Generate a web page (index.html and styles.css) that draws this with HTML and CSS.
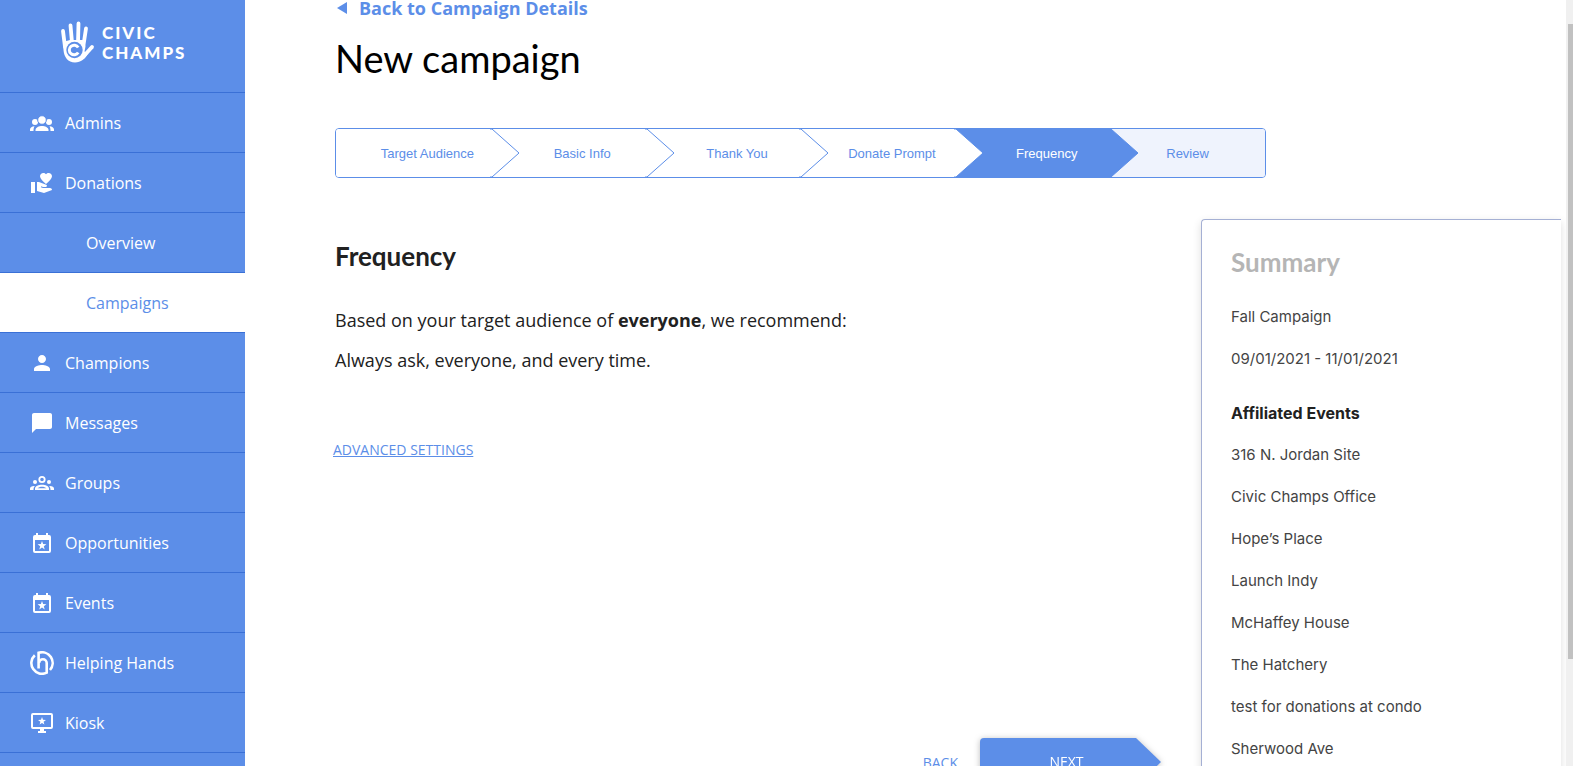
FILE: index.html
```
<!DOCTYPE html>
<html lang="en">
<head>
<meta charset="utf-8">
<meta name="viewport" content="width=device-width, initial-scale=1">
<title>New campaign - Civic Champs</title>
<link rel="stylesheet" href="styles.css">
</head>
<body>

<aside class="sidebar">
  <a class="logo" href="#">
    <svg class="logo-hand" viewBox="0 0 36 44" aria-hidden="true">
      <g fill="none" stroke="#fff" stroke-width="3.800" stroke-linecap="round">
        <path d="M3 11l2 16M10.500 5.500l1.500 17M18.500 3.500l-.5 19M26 8.500L23.500 25"/>
        <path d="M32 27L23 37"/>
      </g>
      <path fill="#fff" d="M3 22l7-2h14l1.500 6.500-1 5 3.500 2c-3 5.500-7 9-13 9C8 42.500 4 37 3.500 30z"/>
      <circle cx="14.500" cy="30" r="8.200" fill="#5c8ee8"/>
      <path d="M18.200 27.500a4.800 4.800 0 1 0 0 5" fill="none" stroke="#fff" stroke-width="3"/>
    </svg>
    <span class="logo-text">CIVIC<br>CHAMPS</span>
  </a>
  <nav class="menu">
    <a href="#">
      <svg viewBox="0 0 24 24"><circle cx="5" cy="11" r="3"/><circle cx="19" cy="11" r="3"/><path d="M0 20v-1.500C0 16.500 2 15.500 4.500 15.300 3.800 16.500 3.500 18 3.500 20zM24 20v-1.500c0-2-2-3-4.500-3.200.7 1.200 1 2.700 1 4.700z"/><path d="M5.500 20v-1c0-2.500 3.500-4 6.500-4s6.500 1.500 6.500 4v1z"/><circle cx="12" cy="9" r="4.300" stroke="#5c8ee8"/></svg>
      Admins
    </a>
    <a href="#">
      <svg viewBox="0 0 24 24"><path d="M1 11h4v11H1zM16 3.250C16.650 2.490 17.660 2 18.700 2 20.550 2 22 3.450 22 5.300c0 2.270-2.910 4.900-6 7.700-3.090-2.810-6-5.440-6-7.700C10 3.450 11.450 2 13.300 2c1.040 0 2.050.49 2.700 1.250zM20 17h-7l-2.090-.73.33-.94L13 16h2.820c.65 0 1.180-.53 1.180-1.180 0-.49-.31-.93-.77-1.110L8.970 11H7v9.020L14 22l8.010-3c-.01-1.100-.9-2-2.010-2z"/></svg>
      Donations
    </a>
    <a class="sub" href="#">Overview</a>
    <a class="sub active" href="#" aria-current="page">Campaigns</a>
    <a href="#">
      <svg viewBox="0 0 24 24"><path d="M12 12c2.210 0 4-1.790 4-4s-1.790-4-4-4-4 1.790-4 4 1.790 4 4 4zm0 2c-2.670 0-8 1.340-8 4v2h16v-2c0-2.660-5.330-4-8-4z"/></svg>
      Champions
    </a>
    <a href="#">
      <svg viewBox="0 0 24 24"><path d="M20 2H4c-1.100 0-2 .9-2 2v18l4-4h14c1.100 0 2-.9 2-2V4c0-1.100-.9-2-2-2z"/></svg>
      Messages
    </a>
    <a href="#">
      <svg viewBox="0 0 24 24"><circle cx="5" cy="11" r="2"/><circle cx="19" cy="11" r="2"/><path d="M0 19v-1.500c0-1.800 2-2.700 4.800-2.500-.9 1.200-1.300 2.300-1.300 4zM24 19v-1.500c0-1.800-2-2.700-4.800-2.500.9 1.200 1.300 2.300 1.300 4z"/><path fill-rule="evenodd" d="M5 19v-1.500c0-2.200 3.600-3.700 7-3.700s7 1.500 7 3.700V19zM7.600 17.300h8.800c-.8-.9-2.600-1.500-4.400-1.500s-3.600.6-4.400 1.500z"/><circle cx="12" cy="8.500" r="2.700" fill="none" stroke="#fff" stroke-width="1.800"/></svg>
      Groups
    </a>
    <a href="#">
      <svg viewBox="0 0 24 24"><path fill-rule="evenodd" d="M6 2h2v2h8V2h2v2h1a2 2 0 0 1 2 2v14a2 2 0 0 1-2 2H5a2 2 0 0 1-2-2V6a2 2 0 0 1 2-2h1zM5 9v11h14V9z"/><path d="M12 10l1.100 3.100 3.300.1-2.600 2 .9 3.200-2.700-1.900-2.700 1.900.9-3.200-2.600-2 3.300-.1z"/></svg>
      Opportunities
    </a>
    <a href="#">
      <svg viewBox="0 0 24 24"><path fill-rule="evenodd" d="M6 2h2v2h8V2h2v2h1a2 2 0 0 1 2 2v14a2 2 0 0 1-2 2H5a2 2 0 0 1-2-2V6a2 2 0 0 1 2-2h1zM5 9v11h14V9z"/><path d="M12 10l1.100 3.100 3.300.1-2.600 2 .9 3.200-2.700-1.900-2.700 1.900.9-3.200-2.600-2 3.300-.1z"/></svg>
      Events
    </a>
    <a href="#">
      <svg viewBox="0 0 24 24"><g fill="none" stroke="#fff" stroke-width="2.600"><path d="M4.800 4.200A10.700 10.700 0 0 0 16.700 21.700V12a3.800 3.800 0 0 0-7.600 0"/><path d="M8.600 17.500V1.800A10.700 10.700 0 0 1 20 19"/></g></svg>
      Helping Hands
    </a>
    <a href="#">
      <svg viewBox="0 0 24 24"><path fill-rule="evenodd" d="M3 2h18a2 2 0 0 1 2 2v12a2 2 0 0 1-2 2h-7v2h2v2H8v-2h2v-2H3a2 2 0 0 1-2-2V4a2 2 0 0 1 2-2zM3 4v12h18V4z"/><path d="M12 6l1 2.800 3 .1-2.400 1.800.8 2.900-2.400-1.700-2.400 1.700.8-2.900L8 8.900l3-.1z"/></svg>
      Kiosk
    </a>
  </nav>
</aside>

<main class="page">
  <a class="back-link" href="#">
    <svg viewBox="0 0 10 12" aria-hidden="true"><path d="M10 0v12L0 6z"/></svg>
    Back to Campaign Details
  </a>
  <h1>New campaign</h1>

  <div class="steps">
    <button type="button">Target Audience<svg viewBox="0 0 30 48"><path d="M0 0h2l27 24L2 48H0"/></svg></button>
    <button type="button">Basic Info<svg viewBox="0 0 30 48"><path d="M0 0h2l27 24L2 48H0"/></svg></button>
    <button type="button">Thank You<svg viewBox="0 0 30 48"><path d="M0 0h2l27 24L2 48H0"/></svg></button>
    <button type="button">Donate Prompt<svg viewBox="0 0 30 48"><path d="M0 0h2l27 24L2 48H0"/></svg></button>
    <button type="button" class="current" aria-current="step">Frequency<svg viewBox="0 0 30 48"><path d="M0 0h2l27 24L2 48H0"/></svg></button>
    <button type="button" class="todo">Review</button>
  </div>

  <div class="columns">
    <section class="frequency">
      <h2>Frequency</h2>
      <p>Based on your target audience of <b>everyone</b>, we recommend:</p>
      <p>Always ask, everyone, and every time.</p>
      <a class="advanced" href="#">ADVANCED SETTINGS</a>
      <div class="actions">
        <button type="button" class="back">BACK</button>
        <button type="button" class="next"><span>NEXT</span></button>
      </div>
    </section>

    <aside class="summary">
      <h2>Summary</h2>
      <p>Fall Campaign</p>
      <p>09/01/2021 - 11/01/2021</p>
      <h3>Affiliated Events</h3>
      <ul>
        <li>316 N. Jordan Site</li>
        <li>Civic Champs Office</li>
        <li>Hope’s Place</li>
        <li>Launch Indy</li>
        <li>McHaffey House</li>
        <li>The Hatchery</li>
        <li>test for donations at condo</li>
        <li>Sherwood Ave</li>
      </ul>
    </aside>
  </div>
</main>

<div class="scroll-track" aria-hidden="true"><div class="scroll-thumb"></div></div>

</body>
</html>
```
FILE: styles.css
```
* {
  box-sizing: border-box;
}

body {
  display: flex;
  height: 100vh;
  margin: 0;
  overflow: hidden;
  background: #fff;
  color: #212121;
  font-family: "Open Sans", sans-serif;
  font-size: 16px;
}

a {
  color: #5c8ee8;
  text-decoration: none;
}

button {
  margin: 0;
  padding: 0;
  border: none;
  background: none;
  color: #5c8ee8;
  cursor: pointer;
}

h1, h2, h3, p, ul {
  margin: 0;
  padding: 0;
}

/* sidebar */

.sidebar {
  flex: 0 0 245px;
  overflow: hidden;
  background: #5c8ee8;
}

.logo {
  display: flex;
  gap: 6px;
  height: 92px;
  padding: 20px 0 0 60px;
  color: #fff;
}

.logo-hand {
  width: 36px;
  height: 44px;
}

.logo-text {
  padding-top: 3px;
  font: 900 17px/20px Lato, sans-serif;
  letter-spacing: 2px;
}

.menu {
  border-bottom: 1px solid #3a70d6;
}

.menu a {
  display: flex;
  align-items: center;
  gap: 11px;
  height: 60px;
  padding-left: 30px;
  border-top: 1px solid #3a70d6;
  color: #fff;
}

.menu svg {
  width: 24px;
  height: 24px;
  fill: #fff;
}

.menu .sub {
  padding-left: 86px;
}

.menu .active {
  background: #fff;
  color: #5c8ee8;
}

/* page */

.page {
  flex: 1;
  min-width: 0;
  padding: 0 5px 0 90px;
  overflow: hidden;
}

.back-link {
  display: flex;
  align-items: center;
  gap: 12px;
  height: 16px;
  padding-left: 2px;
  font-size: 18px;
  font-weight: bold;
}

.back-link svg {
  width: 10px;
  height: 12px;
  fill: #5c8ee8;
}

h1 {
  margin-top: 18px;
  color: #000;
  font: 38px/48px Lato, sans-serif;
}

h2 {
  font: bold 26px/32px Lato, sans-serif;
}

/* progress steps */

.steps {
  display: grid;
  grid-template-columns: repeat(6, 1fr);
  max-width: 931px;
  height: 50px;
  margin-top: 46px;
  overflow: hidden;
  border: 1px solid #5c8ee8;
  border-radius: 4px;
}

.steps button {
  position: relative;
  padding-left: 28px;
  background: #fff;
  font: 13px "Liberation Sans", Arial, sans-serif;
}

/* arrow head that overlaps the next step */
.steps svg {
  position: absolute;
  z-index: 1;
  top: 0;
  left: calc(100% - 1px);
  width: 30px;
  height: 100%;
  fill: #fff;
  stroke: #5c8ee8;
}

.steps .current {
  background: #5c8ee8;
  color: #fff;
}

.steps .current svg {
  fill: #5c8ee8;
}

.steps .todo {
  padding-left: 0;
  background: #eff3fd;
}

/* content */

.columns {
  display: flex;
  gap: 40px;
  margin-top: 41px;
}

.frequency {
  flex: 1;
  padding-top: 21px;
}

.frequency h2 {
  margin-bottom: 28px;
}

.frequency p {
  font-size: 18px;
  line-height: 40px;
}

.advanced {
  display: inline-block;
  margin: 60px 0 0 -2px;
  font-size: 14px;
  line-height: 20px;
  text-decoration: underline;
}

.actions {
  display: flex;
  justify-content: flex-end;
  gap: 22px;
  margin-top: 278px;
}

.actions button {
  height: 48px;
  font: 14px "Open Sans", sans-serif;
}

.actions .next {
  width: 181px;
  color: #fff;
  filter: drop-shadow(0 1px 3px #bbb);
}

.next span {
  display: block;
  padding-right: 8px;
  border-radius: 4px 0 0 4px;
  background: #5c8ee8;
  line-height: 48px;
  clip-path: polygon(0 0, 156px 0, 100% 50%, 156px 100%, 0 100%);
}

.summary {
  flex: 0 0 360px;
  padding: 26px 0 30px 29px;
  border: 1px solid #a5b0d4;
  border-right: none;
  border-radius: 4px 0 0 0;
  box-shadow: 0 3px 8px #ddd;
  color: #444;
  font: 15px/42px Inter, sans-serif;
}

.summary h2 {
  margin-bottom: 18px;
  color: #b5b5b5;
}

.summary h3 {
  margin-top: 12px;
  color: #212121;
  font-size: 16px;
  font-weight: bold;
}

.summary ul {
  list-style: none;
}

/* scrollbar */

.scroll-track {
  flex: 0 0 7px;
  padding: 24px 0 107px 2px;
  background: #f0f0f0;
}

.scroll-thumb {
  height: 100%;
  background: #c1c1c1;
}
```
